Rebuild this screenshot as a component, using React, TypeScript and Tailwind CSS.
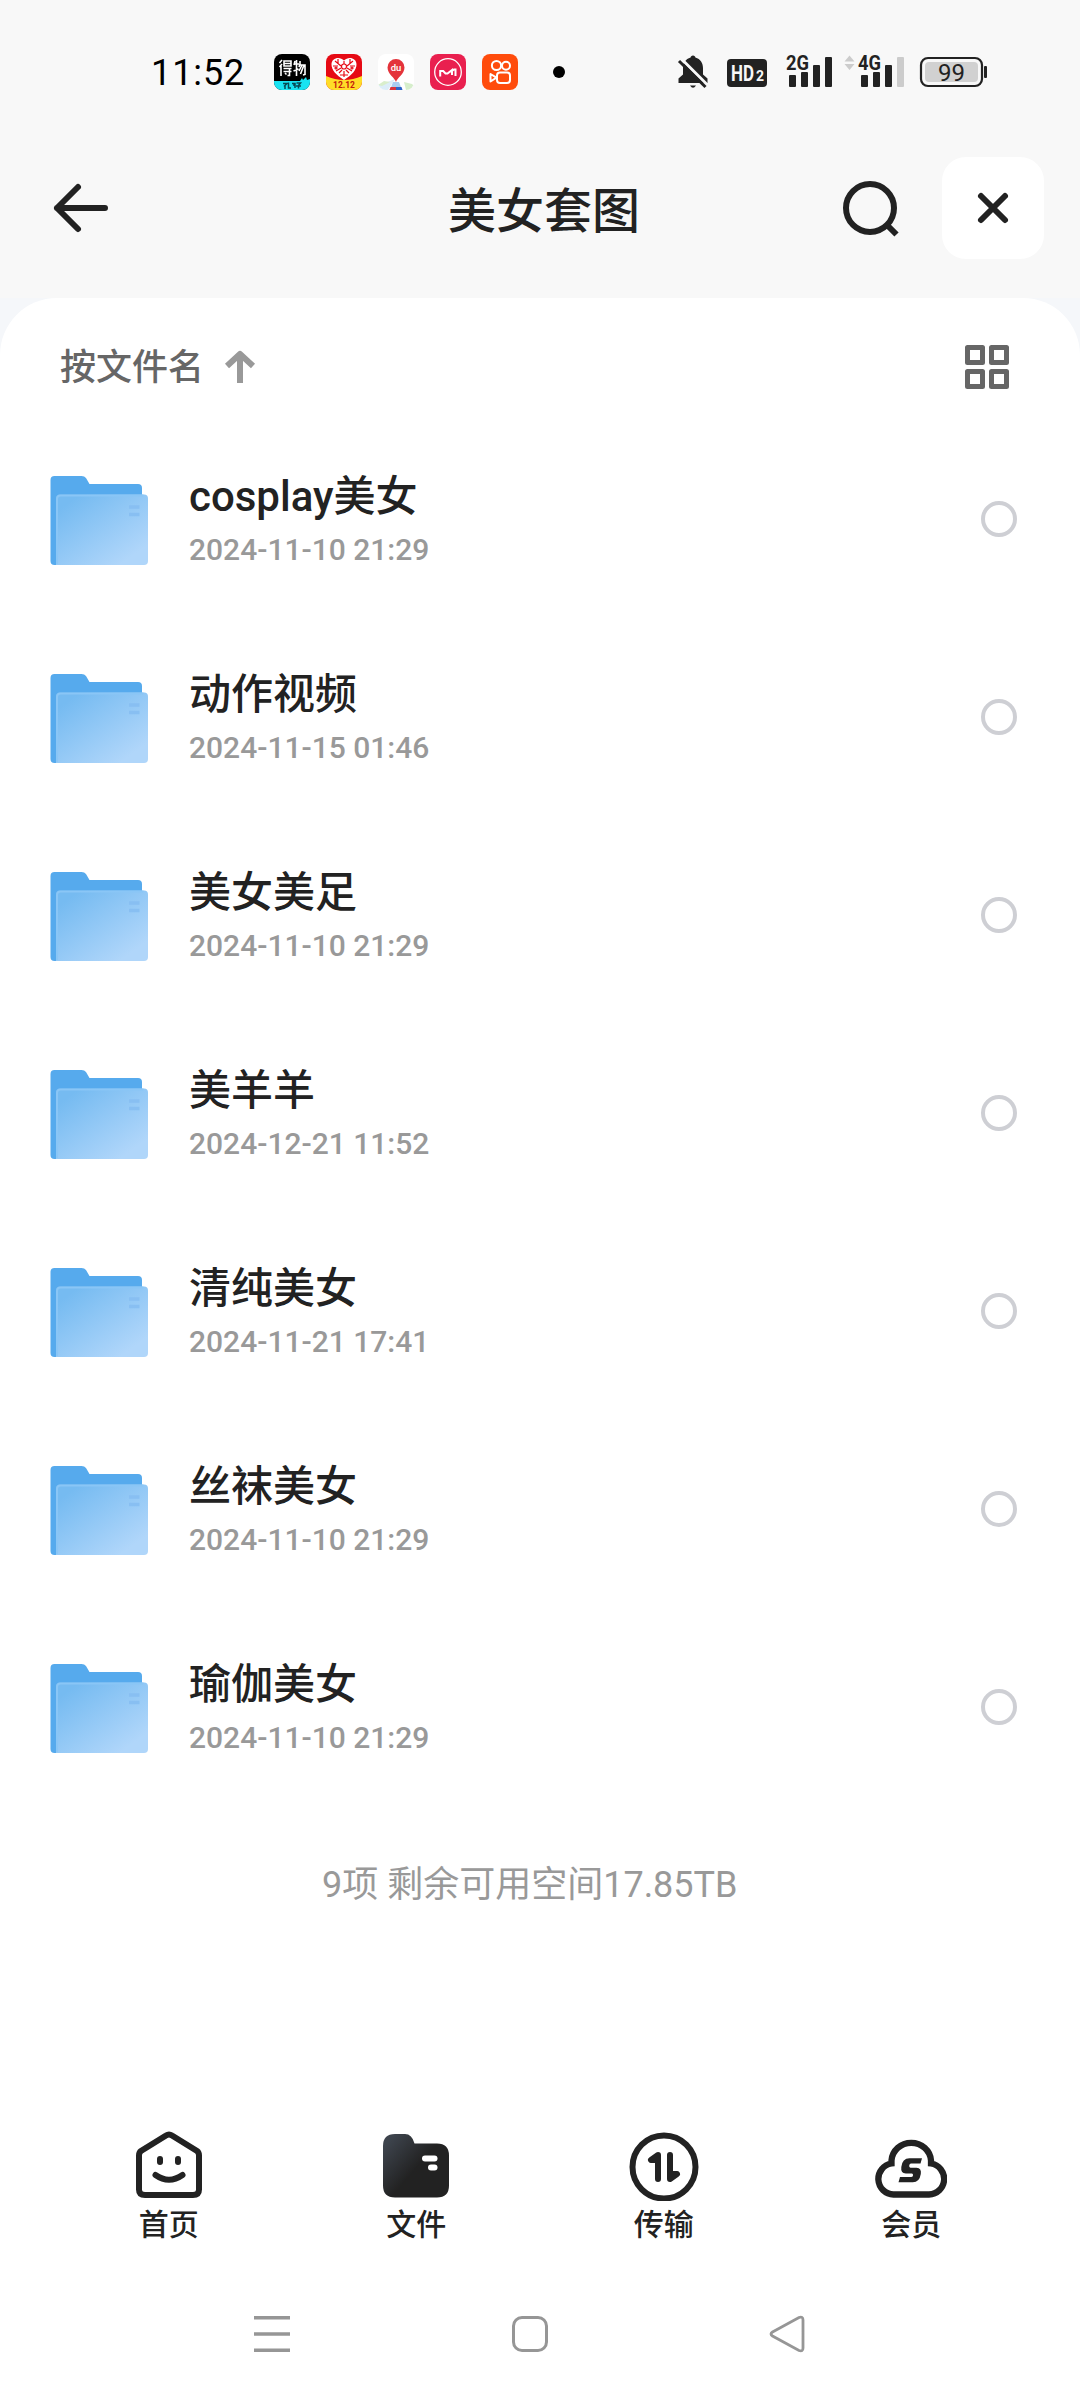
import type { ReactNode } from 'react';

interface Folder {
  name: string;
  date: string;
}

const folders: Folder[] = [
  { name: 'cosplay美女', date: '2024-11-10 21:29' },
  { name: '动作视频', date: '2024-11-15 01:46' },
  { name: '美女美足', date: '2024-11-10 21:29' },
  { name: '美羊羊', date: '2024-12-21 11:52' },
  { name: '清纯美女', date: '2024-11-21 17:41' },
  { name: '丝袜美女', date: '2024-11-10 21:29' },
  { name: '瑜伽美女', date: '2024-11-10 21:29' },
];

function AppIcons() {
  return (
    <div className="flex gap-4">
      {/* Dewu */}
      <svg width="36" height="36" viewBox="0 0 36 36">
        <clipPath id="app"><rect width="36" height="36" rx="8" /></clipPath>
        <g clipPath="url(#app)">
          <rect width="36" height="36" fill="#000" />
          <path d="M0 27h26l2-3 1 2 3-3 1 3 3-1v11H0z" fill="#19e3f2" />
          <g stroke="#fff" strokeWidth="1.600" fill="none">
            <path d="M8 6L5.500 9M8 10l-2.500 3M7 12v10M10 7h7v5h-7zM10 9.500h7M9.500 14.500h8M9.500 17.500h8M15.500 14.500v7h-2M11 19l1.500 1.500" />
            <path d="M21 7l-1 4M20 10h5M22.500 6v16M19.500 17l5-2M26 7v4h5v9.500l-2 .5M26 10l-1 3M28 11l-3 6M30 11l-3.500 9" />
          </g>
          <g stroke="#064b55" strokeWidth="1.500" fill="none">
            <path d="M9 29.500h4l-3 3M11 31v4M14.500 28.500V34h2.500M18 29.500h3v4.500M20 29v3M22.500 29h4l-2 2.500v3M22 32h5" />
          </g>
        </g>
      </svg>
      {/* Pinduoduo */}
      <svg width="36" height="36" viewBox="0 0 36 36">
        <g clipPath="url(#app)">
          <rect width="36" height="36" fill="#e60a14" />
          <path d="M0 22q18 8 36 0v14H0z" fill="#ffdc28" />
          <path d="M18 26C10 21 5.500 16 5.500 10.500 5.500 3.500 14 2 18 6.500 22 2 30.500 3.500 30.500 10.500 30.500 16 26 21 18 26z" fill="#fff" />
          <g stroke="#e60a14" strokeWidth="1.200" fill="none">
            <path d="M9 7l6 5M27 7l-6 5M7 12h5M29 12h-5M10 17l5-3M26 17l-5-3M18 7v3M18 17v6M13 19l3-3M23 19l-3-3M12 5v4M24 5v4M14 21h8" />
            <circle cx="18" cy="12.500" r="2.500" />
            <circle cx="10" cy="14" r="1" />
            <circle cx="26" cy="14" r="1" />
          </g>
        </g>
        <text x="18" y="34" textAnchor="middle" fontFamily="Roboto" fontWeight="700" fontSize="8.500" fill="#c4160c">12.12</text>
      </svg>
      {/* Baidu Maps */}
      <svg width="36" height="36" viewBox="0 0 36 36">
        <g clipPath="url(#app)">
          <rect width="36" height="36" fill="#fff" />
          <path d="M0 31l12-4 5-2-7 11H0z" fill="#dcedf8" />
          <path d="M26 28l8 2 2 2v4h-8z" fill="#d6eecb" />
          <path d="M6 27l6 1-8 4-4-1z" fill="#d9eecb" />
          <path d="M15 28h6l3 8H12z" fill="#a9cdf2" />
          <path d="M12.500 33H18v3h-6.500z" fill="#d9343d" />
          <path d="M18 33h5.500l1 3H18z" fill="#2c63c8" />
          <path d="M18 28c-1-4-8.500-8-8.500-14.500a8.500 8.500 0 0 1 17 0C26.500 20 19 24 18 28z" fill="#e4333b" />
        </g>
        <text x="18" y="17" textAnchor="middle" fontFamily="Roboto" fontWeight="500" fontSize="9.500" fill="#fff">du</text>
      </svg>
      {/* Xiutu */}
      <svg width="36" height="36" viewBox="0 0 36 36">
        <rect width="36" height="36" rx="8" fill="#e9204f" />
        <circle cx="18" cy="18" r="13.300" fill="none" stroke="#fff" strokeWidth="1.300" />
        <path d="M10.200 22.500v-5.500h3l2.300 2.500h2l4.500-3.500v5M22 17l2-1.500h1.500v6.500" fill="none" stroke="#fff" strokeWidth="2" />
      </svg>
      {/* Kuaishou */}
      <svg width="36" height="36" viewBox="0 0 36 36">
        <rect width="36" height="36" rx="8" fill="#ff4c0c" />
        <g fill="none" stroke="#fff" strokeWidth="2" strokeLinejoin="round">
          <circle cx="14.500" cy="11.500" r="4.600" />
          <circle cx="24" cy="11.700" r="4" />
          <rect x="15" y="18.500" width="13" height="10.500" rx="3" />
          <path d="M14.500 23.700L8.500 20v7.500z" />
        </g>
      </svg>
    </div>
  );
}

function StatusBar() {
  return (
    <div className="flex h-36 items-center pl-[151px]">
      <span className="w-[123px] pt-0.5 text-[36px] leading-none tracking-[0.9px] text-black">11:52</span>
      <AppIcons />
      <span className="ml-[35px] size-3 rounded-full bg-black" />
      <svg className="ml-[85px] mt-1.5" width="360" height="70" viewBox="0 0 360 70">
        {/* muted bell */}
        <path d="M43 15.500c1.500 0 2.300 1 2.400 2C50.500 19 53 23 53 28v6.500l4.500 4v4.500H28.500v-4.500L33 34.500V28c0-5 2.500-9 7.600-10.500.1-1 .9-2 2.400-2z" fill="#222" />
        <path d="M40 45.500h6q-3 4.500-6 0z" fill="#222" />
        <path d="M31.500 19L58 45.500" stroke="#f8f8f8" strokeWidth="3" />
        <path d="M29 21l26.500 26" stroke="#222" strokeWidth="3" />
        {/* HD2 */}
        <rect x="77" y="19" width="40" height="28" rx="4" fill="#222" />
        <text x="81" y="41" fontFamily="Roboto" fontWeight="700" fontSize="22" textLength="23" lengthAdjust="spacingAndGlyphs" fill="#f8f8f8">HD</text>
        <text x="106" y="41" fontFamily="Roboto" fontWeight="700" fontSize="14" fill="#f8f8f8">2</text>
        {/* signal one */}
        <text x="136" y="30" fontFamily="Roboto" fontWeight="700" fontSize="21" textLength="23" lengthAdjust="spacingAndGlyphs" fill="#222">2G</text>
        <g fill="#222">
          <rect x="139" y="35" width="7" height="12" rx="1" />
          <rect x="151" y="32" width="7" height="15" rx="1" />
          <rect x="163" y="25" width="7" height="22" rx="1" />
          <rect x="175" y="17" width="7" height="30" rx="1" />
        </g>
        {/* signal two */}
        <path d="M194.500 21.500l5-6 5 6zM194.500 24h10l-5 6z" fill="#ccc" />
        <text x="208" y="30" fontFamily="Roboto" fontWeight="700" fontSize="21" textLength="23" lengthAdjust="spacingAndGlyphs" fill="#222">4G</text>
        <g fill="#222">
          <rect x="211" y="35" width="7" height="12" rx="1" />
          <rect x="223" y="32" width="7" height="15" rx="1" />
          <rect x="235" y="25" width="7" height="22" rx="1" />
        </g>
        <rect x="247" y="17" width="7" height="30" rx="1" fill="#ccc" />
        {/* battery */}
        <rect x="271" y="18" width="61" height="28" rx="7" fill="none" stroke="#222" strokeWidth="2.200" />
        <rect x="275" y="22" width="53" height="20" rx="4" fill="#d1d1d1" />
        <rect x="334" y="26" width="3" height="12" rx="1" fill="#222" />
        <text x="301.500" y="41" textAnchor="middle" fontFamily="Roboto" fontSize="24" fill="#222">99</text>
      </svg>
    </div>
  );
}

function Header() {
  return (
    <header className="flex h-[154px] items-center pb-[26px]">
      <svg className="ml-[51px]" width="60" height="60" viewBox="0 0 60 60" fill="none" stroke="#222" strokeWidth="6" strokeLinecap="round" strokeLinejoin="round">
        <path d="M27 9L6 30l21 21M6 30h48" />
      </svg>
      <h1 className="ml-[337px] pt-[7px] text-[48px] font-medium leading-none text-[#222]">美女套图</h1>
      <svg className="ml-[200px]" width="64" height="64" viewBox="0 0 64 64" fill="none" stroke="#222" strokeWidth="6">
        <circle cx="30" cy="32" r="24" />
        <path d="M46 48l10.500 10.500" />
      </svg>
      <button className="ml-[38px] flex size-[102px] items-center justify-center rounded-[24px] bg-white">
        <svg width="36" height="36" viewBox="0 0 36 36" stroke="#222" strokeWidth="6" strokeLinecap="round">
          <path d="M6 6l24 24M30 6L6 30" />
        </svg>
      </button>
    </header>
  );
}

function FolderIcon() {
  return (
    <svg width="98" height="90" viewBox="-0.500 0 98 90">
      <defs>
        <linearGradient id="front" x1="0.1" y1="0.15" x2="0.8" y2="0.9">
          <stop offset="0" stopColor="#76bbf1" />
          <stop offset="1" stopColor="#b0d6fa" />
        </linearGradient>
      </defs>
      <path d="M0 4a4 4 0 0 1 4-4h27q3 0 4.500 2L39 8h48.500q4 0 4 4v26H6v51H4a4 4 0 0 1-4-4z" fill="#56aaed" />
      <path d="M5.500 22.500q0-4 4-4h84q4 0 4 4V85a4 4 0 0 1-4 4h-88z" fill="url(#front)" />
      <path d="M6.500 88V23q0-3.500 3.500-3.500h83" fill="none" stroke="#8ac6f6" strokeWidth="2" />
      <path d="M78.500 31h10.500M78.500 38.500h10.500" stroke="#88bff2" strokeWidth="3.500" />
    </svg>
  );
}

function FolderRow({ name, date }: Folder) {
  return (
    <li className="flex h-[198px] items-center pl-[50px] pr-[63px]">
      <FolderIcon />
      <div className="ml-[41px] flex-1 pb-1">
        <p className="text-[42px] font-medium leading-[56px] text-[#222]">{name}</p>
        <p className="mt-[5px] text-[30px] font-medium leading-[40px] text-[#999]">{date}</p>
      </div>
      <span className="mb-1 size-9 rounded-full border-4 border-[#cecfd4]" />
    </li>
  );
}

function Tab({ label, children }: { label: string; children: ReactNode }) {
  return (
    <div className="flex flex-1 flex-col items-center">
      <svg width="72" height="72" viewBox="0 0 72 72">{children}</svg>
      <span className="mt-1 text-[30px] font-medium leading-[40px] text-[#222]">{label}</span>
    </div>
  );
}

function TabBar() {
  return (
    <nav className="flex h-[139px] px-[45px]">
      <Tab label="首页">
        <path d="M33 6.500q3-2 6 0l25 15.500q2 1.500 2 4.500v34q0 5.500-6 5.500H12q-6 0-6-5.500v-34q0-3 2-4.500z" fill="none" stroke="#222" strokeWidth="6" />
        <rect x="24" y="27" width="6" height="9" rx="3" fill="#222" />
        <rect x="42" y="27" width="6" height="9" rx="3" fill="#222" />
        <path d="M22.500 46q13.500 9.500 27 0" fill="none" stroke="#222" strokeWidth="6" strokeLinecap="round" />
      </Tab>
      <Tab label="文件">
        <defs>
          <linearGradient id="tab" x1="0" y1="0.1" x2="0.6" y2="0.6">
            <stop offset="0.1" stopColor="#3d434c" />
            <stop offset="0.85" stopColor="#222" />
          </linearGradient>
        </defs>
        <path d="M3 17Q3 5 15 5h10q7 0 9.500 9.500H57q12 0 12 12v30q0 12-12 12H15q-12 0-12-12z" fill="url(#tab)" />
        <rect x="42" y="26.500" width="15.500" height="6" rx="3" fill="#fff" />
        <rect x="48" y="35.500" width="9.500" height="6" rx="3" fill="#fff" />
      </Tab>
      <Tab label="传输">
        <circle cx="36" cy="38" r="31.500" fill="none" stroke="#222" strokeWidth="6" />
        <path d="M30 50V26l-7 5h7M42 26v24l7-5h-7" fill="none" stroke="#222" strokeWidth="6" strokeLinecap="round" strokeLinejoin="round" />
      </Tab>
      <Tab label="会员">
        <path d="M18.500 65.500A15.600 15.600 0 0 1 16.500 34.500V31.500A19.800 19 0 0 1 56 31.500V34.500A15.600 15.600 0 0 1 54 65.500z" fill="none" stroke="#222" strokeWidth="6.300" />
        <path d="M47 29.300l-1.500 5.200H36q-1.500 0-1.800 2t1.300 2.200h6q5.300.3 4.300 6.300-1.300 8.300-8 8.300H23.500l1.500-5.200h11q1.700 0 2-1.700t-1.200-1.800h-6q-5.300-.3-4.500-6.600 1-8.700 8.200-8.700z" fill="#222" />
      </Tab>
    </nav>
  );
}

function SystemNav() {
  return (
    <div className="flex h-[132px] items-center pl-[252px]">
      <svg width="40" height="40" viewBox="0 0 40 40" stroke="#969696" strokeWidth="3.500">
        <path d="M2 3.750h36M2 20h36M2 36.250h36" />
      </svg>
      <svg className="ml-[218px]" width="40" height="40" viewBox="0 0 40 40" fill="none" stroke="#969696" strokeWidth="3">
        <rect x="3.500" y="3.500" width="33" height="33" rx="8.500" />
      </svg>
      <svg className="ml-[218px]" width="40" height="40" viewBox="0 0 40 40" fill="none" stroke="#969696" strokeWidth="2.800">
        <path d="M4.500 18L31 3.500q4-1.500 4 2.500v28q0 4-4 2.500L4.500 22q-3-2 0-4z" />
      </svg>
    </div>
  );
}

export default function App() {
  return (
    <div className="flex h-[2400px] w-[1080px] flex-col overflow-hidden bg-[#f8f8f8] font-['Roboto','Noto_Sans_CJK_SC',sans-serif]">
      <StatusBar />
      <Header />
      <main className="flex flex-1 flex-col bg-[#f5f7fa]">
        <div className="flex flex-1 flex-col rounded-t-[57px] bg-white">
          <div className="flex h-[124px] items-center pl-[60px] pr-[69px] pt-[14px]">
            <span className="pt-0.5 text-[36px] font-medium leading-none text-[#666]">按文件名</span>
            <svg className="ml-5" width="32" height="36" viewBox="0 0 32 36" fill="none" stroke="#999" strokeWidth="6" strokeLinejoin="round">
              <path d="M3 17L16 5l13 12M16 5v29" />
            </svg>
            <svg className="ml-auto" width="48" height="48" viewBox="0 0 48 48" fill="none" stroke="#666" strokeWidth="5" strokeLinejoin="round">
              <path d="M4.500 4.500h15v15h-15zM28.500 4.500h15v15h-15zM4.500 28.500h15v15h-15zM28.500 28.500h15v15h-15z" />
            </svg>
          </div>
          <ul>
            {folders.map((folder) => (
              <FolderRow key={folder.name} {...folder} />
            ))}
          </ul>
          <p className="mt-[52px] pl-[322px] text-[36px] leading-[50px] text-[#999]">9项 剩余可用空间17.85TB</p>
          <div className="mt-auto">
            <TabBar />
            <SystemNav />
          </div>
        </div>
      </main>
    </div>
  );
}
